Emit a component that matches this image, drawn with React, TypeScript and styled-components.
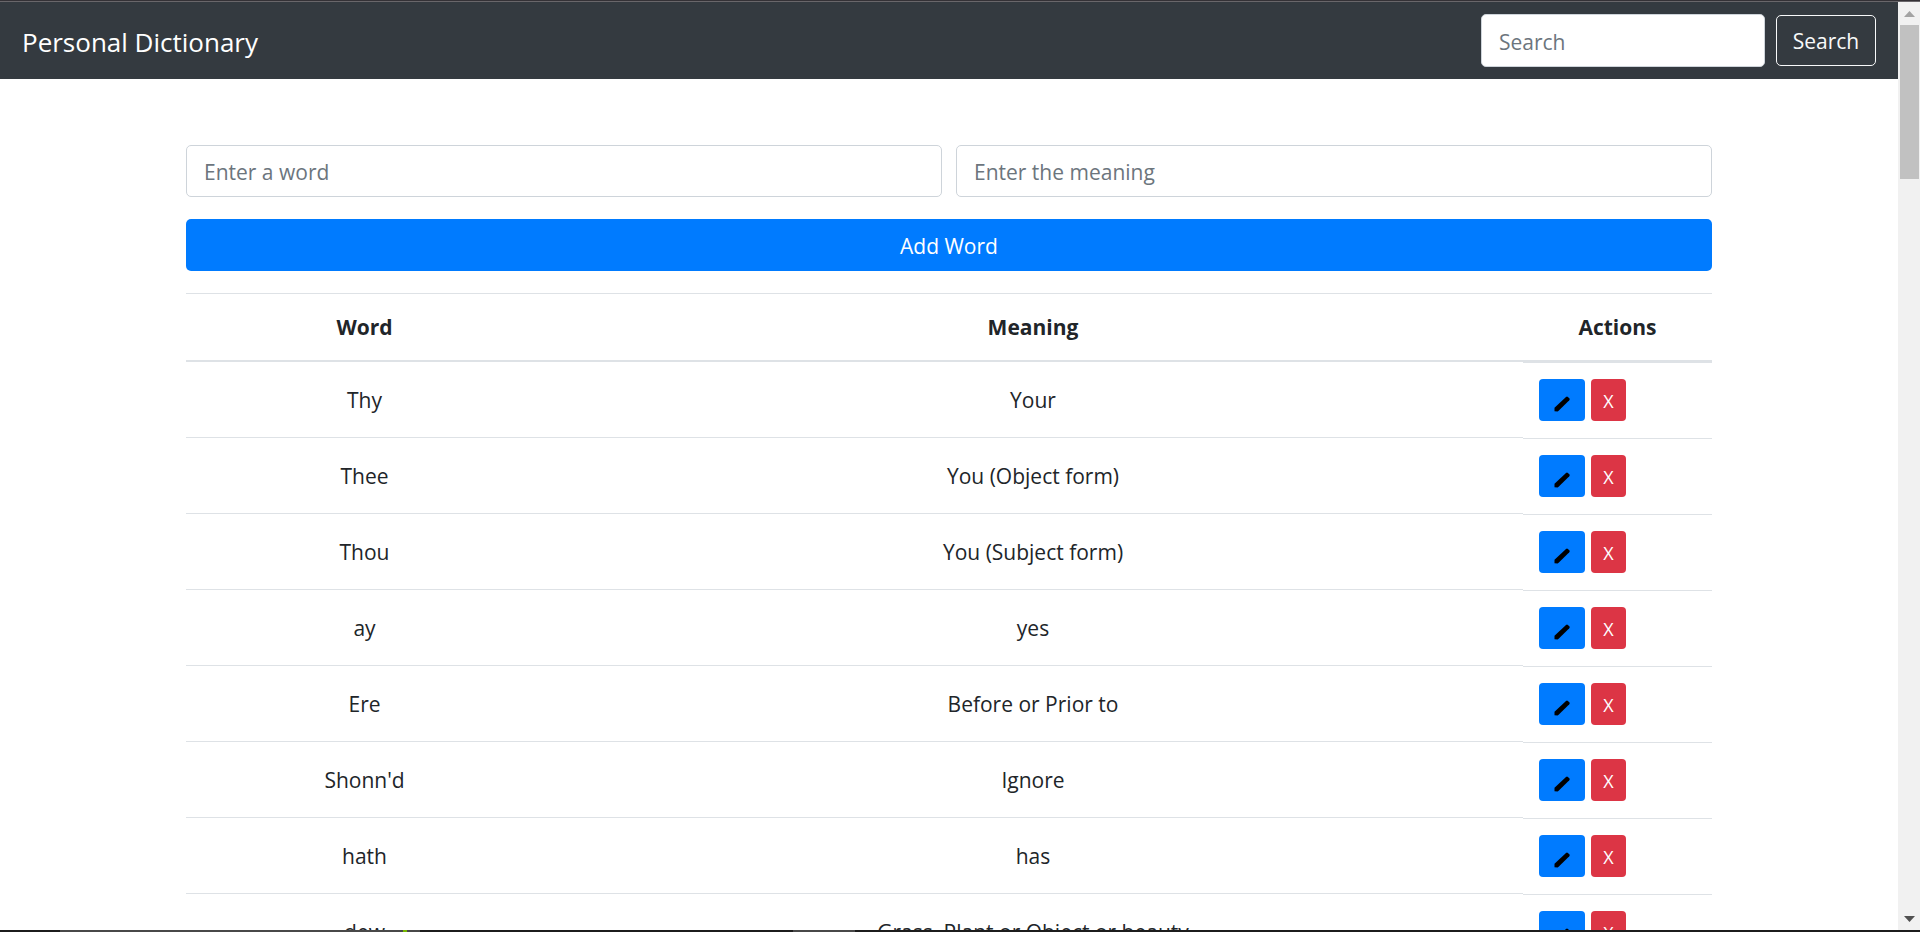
import React, { useState } from "react";
import styled, { createGlobalStyle, css } from "styled-components";

const GlobalStyle = createGlobalStyle`
  *, *::before, *::after { box-sizing: border-box; }
  body {
    margin: 0;
    background: #fff;
    color: #212529;
    font-family: "Segoe UI", "Open Sans", "Noto Sans", sans-serif;
    font-size: 21px;
    line-height: 32px;
  }
  button, input { font: inherit; margin: 0; }
`;

const Shell = styled.div`
  display: flex;
  flex-direction: column;
  height: 100vh;
  overflow: hidden;
`;

const TopEdge = styled.div`
  flex: none;
  height: 2px;
  background: #343136;
  border-bottom: 1px solid #69666a;
`;

const Taskbar = styled.div`
  flex: none;
  display: flex;
  height: 2px;
  padding-left: 60px;
  background: #1c1c1c;
`;

const TaskItem = styled.span<{ $width: number; $gap?: number; $color: string }>`
  width: ${(p) => p.$width}px;
  margin-left: ${(p) => p.$gap ?? 0}px;
  background: ${(p) => p.$color};
`;

const Viewport = styled.div`
  flex: 1;
  min-height: 0;
  display: flex;
`;

const Page = styled.div`
  flex: 1;
  min-width: 0;
  overflow: hidden;
`;

const ScrollTrack = styled.div`
  flex: none;
  display: flex;
  flex-direction: column;
  width: 22px;
  padding-left: 2px;
  background: #f1f1f1;
`;

const ScrollArrow = styled.svg`
  flex: none;
  display: block;
  width: 19px;
  height: 23px;
`;

const ScrollThumb = styled.div`
  width: 19px;
  height: 154px;
  margin-bottom: auto;
  background: #c1c1c1;
`;

const Navbar = styled.nav`
  display: flex;
  align-items: center;
  justify-content: space-between;
  padding: 12px 22px;
  background: #343a40;
`;

const Brand = styled.a`
  padding-top: 2px;
  color: #fff;
  font-size: 26px;
  text-decoration: none;
`;

const SearchForm = styled.form`
  display: flex;
  align-items: center;
  gap: 11px;
`;

const Field = styled.input`
  flex: 1;
  min-width: 0;
  height: 52px;
  padding: 2px 17px 0;
  border: 1px solid #ced4da;
  border-radius: 5px;
  background: #fff;
  color: #495057;
  &::placeholder { color: #6c757d; opacity: 1; }
`;

const SearchField = styled(Field)`
  flex: none;
  width: 284px;
  height: 53px;
`;

const SearchButton = styled.button`
  height: 51px;
  width: 100px;
  padding: 0;
  border: 1px solid #f8f9fa;
  border-radius: 5px;
  background: transparent;
  color: #f8f9fa;
`;

const Container = styled.main`
  max-width: 1526px;
  margin: 66px auto 0;
`;

const WordForm = styled.form`
  display: flex;
  flex-wrap: wrap;
  gap: 22px 14px;
`;

const AddButton = styled.button`
  width: 100%;
  height: 52px;
  padding: 2px 0 0;
  border: 0;
  border-radius: 5px;
  background: #007bff;
  color: #fff;
`;

const WordTable = styled.table`
  width: 100%;
  margin-top: 22px;
  border-collapse: separate;
  border-spacing: 0;
  table-layout: fixed;
  text-align: center;
`;

const Head = styled.th<{ $width?: string }>`
  width: ${(p) => p.$width ?? "auto"};
  height: 69px;
  padding: 0 16px;
  border-top: 1px solid #dee2e6;
  border-bottom: 2px solid #dee2e6;
  font-weight: 700;
`;

const Cell = styled.td`
  height: 76px;
  padding: 0 16px;
  border-bottom: 1px solid #dee2e6;
`;

const ActionCell = styled.td`
  padding: 16px 16px 17px;
  border-top: 1px solid #dee2e6;
`;

const Actions = styled.div`
  display: flex;
  gap: 6px;
`;

const ActionButton = styled.button<{ $danger?: boolean }>`
  display: flex;
  align-items: center;
  justify-content: center;
  height: 42px;
  border: 0;
  border-radius: 4px;
  color: #fff;
  font-size: 18px;
  ${(p) =>
    p.$danger
      ? css`width: 35px; padding: 2px 0 0; background: #dc3545;`
      : css`width: 46px; padding: 8px 0 0; background: #007bff;`}
`;

const Pencil = () => (
  <svg width="16" height="16" viewBox="0 0 16 16" aria-hidden="true">
    <path d="M0.500 15.300V11.700L12 1q1-.8 1.900 0l1.400 1.300q.8 1 0 1.900L4.600 14.800l-1 .6z" fill="#000" />
  </svg>
);

const words = [
  ["Thy", "Your"],
  ["Thee", "You (Object form)"],
  ["Thou", "You (Subject form)"],
  ["ay", "yes"],
  ["Ere", "Before or Prior to"],
  ["Shonn'd", "Ignore"],
  ["hath", "has"],
  ["dew", "Grass, Plant or Object or beauty"],
];

export default function App() {
  const [rows, setRows] = useState(words);
  const [word, setWord] = useState("");
  const [meaning, setMeaning] = useState("");

  const addWord = (e: React.FormEvent) => {
    e.preventDefault();
    if (!word || !meaning) return;
    setRows([...rows, [word, meaning]]);
    setWord("");
    setMeaning("");
  };

  return (
    <Shell>
      <GlobalStyle />
      <TopEdge />
      <Viewport>
        <Page>
          <Navbar>
            <Brand href="#">Personal Dictionary</Brand>
            <SearchForm role="search" onSubmit={(e) => e.preventDefault()}>
              <SearchField type="search" placeholder="Search" aria-label="Search" />
              <SearchButton type="submit">Search</SearchButton>
            </SearchForm>
          </Navbar>
          <Container>
            <WordForm onSubmit={addWord}>
              <Field placeholder="Enter a word" aria-label="Word" value={word} onChange={(e) => setWord(e.target.value)} />
              <Field placeholder="Enter the meaning" aria-label="Meaning" value={meaning} onChange={(e) => setMeaning(e.target.value)} />
              <AddButton type="submit">Add Word</AddButton>
            </WordForm>
            <WordTable>
              <thead>
                <tr>
                  <Head scope="col" $width="357px">Word</Head>
                  <Head scope="col">Meaning</Head>
                  <Head scope="col" $width="189px">Actions</Head>
                </tr>
              </thead>
              <tbody>
                {rows.map(([w, m]) => (
                  <tr key={w}>
                    <Cell>{w}</Cell>
                    <Cell>{m}</Cell>
                    <ActionCell>
                      <Actions>
                        <ActionButton type="button" aria-label={`Edit ${w}`}><Pencil /></ActionButton>
                        <ActionButton type="button" $danger onClick={() => setRows(rows.filter((r) => r[0] !== w))}>X</ActionButton>
                      </Actions>
                    </ActionCell>
                  </tr>
                ))}
              </tbody>
            </WordTable>
          </Container>
        </Page>
        <ScrollTrack aria-hidden="true">
          <ScrollArrow viewBox="0 0 19 23"><path d="M4 15h11L9.500 9z" fill="#a3a3a3" /></ScrollArrow>
          <ScrollThumb />
          <ScrollArrow viewBox="0 0 19 23"><path d="M4 9h11l-5.500 6z" fill="#505050" /></ScrollArrow>
        </ScrollTrack>
      </Viewport>
      <Taskbar aria-hidden="true">
        <TaskItem $width={343} $color="#484848" />
        <TaskItem $width={4} $color="#76b900" />
        <TaskItem $width={13} $color="#484848" />
        <TaskItem $width={62} $gap={373} $color="#484848" />
      </Taskbar>
    </Shell>
  );
}
